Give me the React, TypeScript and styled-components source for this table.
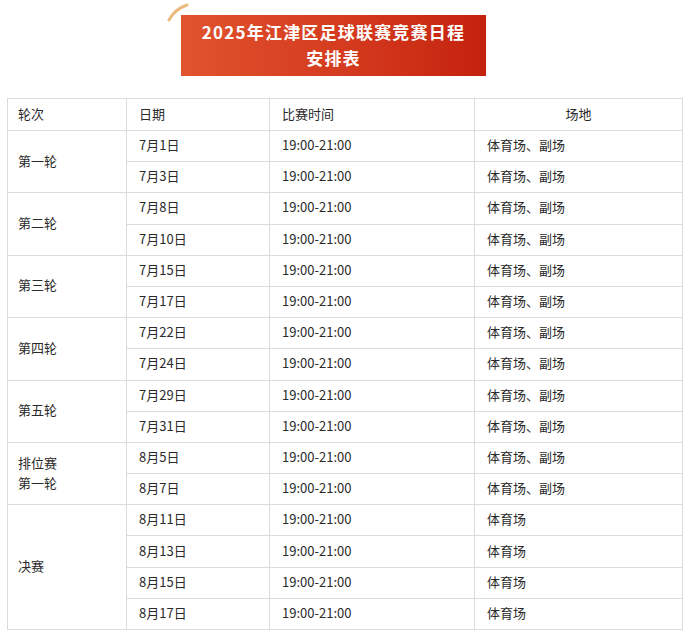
import React from "react";
import styled, { createGlobalStyle } from "styled-components";

const Global = createGlobalStyle`
  html, body { margin: 0; padding: 0; background: #ffffff; }
  body { font-family: "Noto Sans CJK SC", "Liberation Sans", sans-serif; }
`;

const Page = styled.div`
  width: 692px;
  padding: 15px 0 0 7px;
  box-sizing: border-box;
`;

const BannerRow = styled.div`
  display: flex;
  padding-left: 174px;
  margin-bottom: 22px;
`;

const Banner = styled.div`
  position: relative;
  width: 305px;
  height: 61px;
  box-sizing: border-box;
  padding-top: 4px;
  background: linear-gradient(90deg, #e0532d 0%, #d43a1e 55%, #c4220e 100%);
  color: #ffffff;
  font-weight: 700;
  font-size: 17px;
  line-height: 26px;
  letter-spacing: 1.2px;
  text-align: center;
  font-family: "Noto Sans CJK SC", sans-serif;
`;

const Arc = styled.svg`
  position: absolute;
  left: -14px;
  top: -12px;
`;

const Table = styled.table`
  width: 675px;
  border-collapse: collapse;
  table-layout: fixed;
  color: #2a2a2a;
  font-size: 13px;
  font-family: "Noto Sans CJK SC", "Liberation Sans", sans-serif;
`;

const Head = styled.th<{ $center?: boolean }>`
  height: 29px;
  border: 1px solid #dcdcdc;
  font-weight: 400;
  text-align: ${(p) => (p.$center ? "center" : "left")};
  padding: 0 12px 2px;
  vertical-align: middle;
`;

const Cell = styled.td<{ $first?: boolean }>`
  height: 28.2px;
  border: 1px solid #dcdcdc;
  padding: 0 ${(p) => (p.$first ? "10px" : "12px")} 2px;
  vertical-align: middle;
  line-height: 20px;
  white-space: nowrap;
`;

type Round = { name: string[]; dates: string[]; venue: string };

const rounds: Round[] = [
  { name: ["第一轮"], dates: ["7月1日", "7月3日"], venue: "体育场、副场" },
  { name: ["第二轮"], dates: ["7月8日", "7月10日"], venue: "体育场、副场" },
  { name: ["第三轮"], dates: ["7月15日", "7月17日"], venue: "体育场、副场" },
  { name: ["第四轮"], dates: ["7月22日", "7月24日"], venue: "体育场、副场" },
  { name: ["第五轮"], dates: ["7月29日", "7月31日"], venue: "体育场、副场" },
  { name: ["排位赛", "第一轮"], dates: ["8月5日", "8月7日"], venue: "体育场、副场" },
  { name: ["决赛"], dates: ["8月11日", "8月13日", "8月15日", "8月17日"], venue: "体育场" },
];

export default function App() {
  return (
    <Page>
      <Global />
      <BannerRow>
        <Banner>
          <Arc width="24" height="20" viewBox="0 0 24 20">
            <path d="M2 17 Q8 6 20 2" fill="none" stroke="#ebbb7e" strokeWidth="3" strokeLinecap="round" />
          </Arc>
          2025年江津区足球联赛竞赛日程
          <br />
          安排表
        </Banner>
      </BannerRow>
      <Table>
        <colgroup>
          <col style={{ width: 119 }} />
          <col style={{ width: 143 }} />
          <col style={{ width: 205 }} />
          <col style={{ width: 208 }} />
        </colgroup>
        <thead>
          <tr>
            <Head style={{ paddingLeft: 10 }}>轮次</Head>
            <Head>日期</Head>
            <Head>比赛时间</Head>
            <Head $center>场地</Head>
          </tr>
        </thead>
        <tbody>
          {rounds.map((r) =>
            r.dates.map((d, i) => (
              <tr key={d}>
                {i === 0 && (
                  <Cell $first rowSpan={r.dates.length}>
                    {r.name.map((n, k) => (
                      <React.Fragment key={n + k}>
                        {k > 0 && <br />}
                        {n}
                      </React.Fragment>
                    ))}
                  </Cell>
                )}
                <Cell>{d}</Cell>
                <Cell>19:00-21:00</Cell>
                <Cell>{r.venue}</Cell>
              </tr>
            ))
          )}
        </tbody>
      </Table>
    </Page>
  );
}
